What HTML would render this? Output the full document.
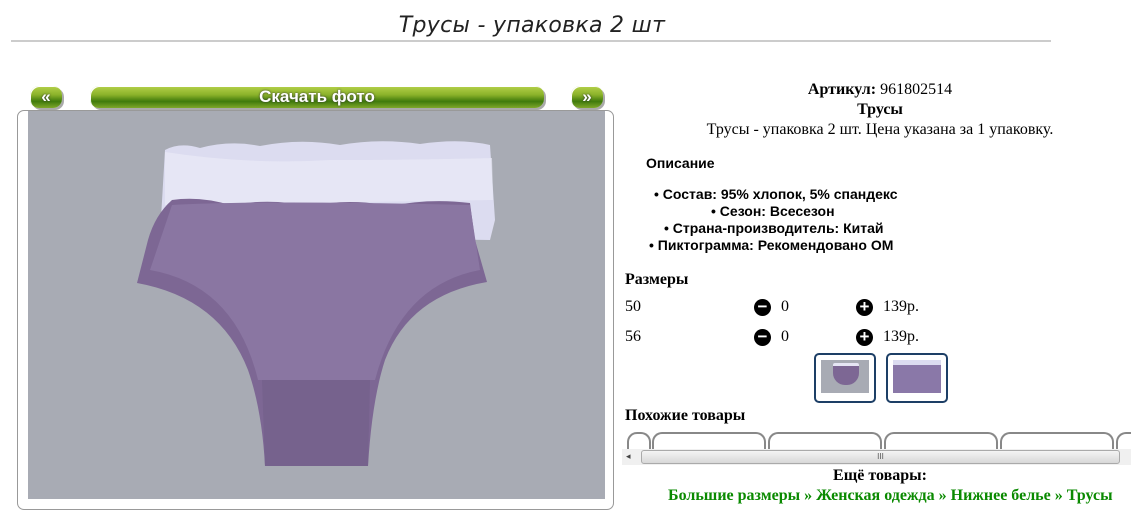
<!DOCTYPE html>
<html><head><meta charset="utf-8"><style>
*{margin:0;padding:0;box-sizing:border-box}
body{width:1131px;height:499px;overflow:hidden;background:#fff;position:relative;font-family:"Liberation Serif",serif;color:#000}
.a{position:absolute}
.t{font-family:"DejaVu Sans",sans-serif;font-style:italic;font-size:22px;color:#222;left:0;width:1064px;text-align:center;top:13px;letter-spacing:0.3px}
.hr{left:11px;width:1040px;top:40px;height:2px;background:#ccc}
.btn{background:linear-gradient(#b5d14a 0%,#8bb22a 40%,#3f7a0c 70%,#7fa82a 100%);border-radius:9px;box-shadow:2px 2px 0 #aaa, 1px 1px 0 #fff inset;color:#fff;font:bold 17px "Liberation Sans",sans-serif;text-align:center;line-height:22px;text-shadow:0 0 2px #333}
.frame{left:17px;top:110px;width:597px;height:400px;border:1px solid #999;border-radius:7px}
.s{font-family:"Liberation Sans",sans-serif;font-weight:bold;font-size:14px}
.ic{width:17px;height:17px;border-radius:50%;background:#000;color:#fff;font:bold 17px/16px "Liberation Sans",sans-serif;text-align:center}
.tab{top:432px;height:20px;border:2px solid #888;border-bottom:none;border-radius:10px 10px 0 0}
.th{top:353px;width:62px;height:50px;border:2px solid #1d3f66;border-radius:5px}
.f{font-size:16px}
</style></head><body>
<div class="a t">Трусы - упаковка 2 шт</div>
<div class="a hr"></div>
<div class="a btn" style="left:30px;top:86px;width:32px;height:22px">«</div>
<div class="a btn" style="left:90px;top:86px;width:454px;height:22px">Скачать фото</div>
<div class="a btn" style="left:571px;top:86px;width:32px;height:22px">»</div>
<div class="a frame"></div>
<svg class="a" style="left:28px;top:111px" width="577" height="388" viewBox="28 111 577 388">
<rect x="28" y="111" width="577" height="388" fill="#a8abb4"/>
<path d="M165 150 Q180 142 200 148 Q230 140 260 146 Q300 138 340 145 Q380 138 420 144 Q460 138 490 145 L495 220 L490 240 L160 235 Z" fill="#dcdcf0"/>
<path d="M165 152 Q250 165 330 160 Q420 160 492 158 L493 200 L165 205 Z" fill="#e9e9f7" opacity=".7"/>
<path d="M172 200 Q200 196 230 205 Q270 198 310 206 Q350 198 390 206 Q430 198 470 203 L475 240 L487 282 Q410 295 385 360 Q372 400 368 466 L265 466 Q262 410 248 370 Q220 298 137 283 L148 240 Q155 215 172 200 Z" fill="#7d6794"/>
<path d="M172 205 Q260 200 470 205 L480 270 Q400 285 375 380 L258 380 Q235 285 150 270 Z" fill="#8a76a2"/>
<path d="M262 380 L370 380 L368 466 L265 466 Z" fill="#76628d"/>
</svg>
<div class="a f" style="left:610px;top:81px;width:540px;text-align:center"><b>Артикул:</b> 961802514</div>
<div class="a f" style="left:610px;top:101px;width:540px;text-align:center"><b>Трусы</b></div>
<div class="a f" style="left:610px;top:121px;width:540px;text-align:center">Трусы - упаковка 2 шт. Цена указана за 1 упаковку.</div>
<div class="a s" style="left:646px;top:155px">Описание</div>
<div class="a s" style="left:654px;top:186px">• Состав: 95% хлопок, 5% спандекс</div>
<div class="a s" style="left:711px;top:203px">• Сезон: Всесезон</div>
<div class="a s" style="left:664px;top:220px">• Страна-производитель: Китай</div>
<div class="a s" style="left:649px;top:237px">• Пиктограмма: Рекомендовано ОМ</div>
<div class="a f" style="left:625px;top:271px;font-weight:bold">Размеры</div>
<div class="a f" style="left:625px;top:298px">50</div>
<div class="a ic" style="left:754px;top:299px">−</div>
<div class="a f" style="left:781px;top:298px">0</div>
<div class="a ic" style="left:856px;top:299px">+</div>
<div class="a f" style="left:883px;top:298px">139р.</div>
<div class="a f" style="left:625px;top:328px">56</div>
<div class="a ic" style="left:754px;top:329px">−</div>
<div class="a f" style="left:781px;top:328px">0</div>
<div class="a ic" style="left:856px;top:329px">+</div>
<div class="a f" style="left:883px;top:328px">139р.</div>
<div class="a th" style="left:814px"><div style="margin:5px;height:33px;background:#a8abb4;position:relative"><div style="position:absolute;left:12px;top:3px;width:26px;height:22px;background:#7d6794;border-radius:2px 2px 12px 12px;border-top:3px solid #e6e6f4"></div></div></div>
<div class="a th" style="left:886px"><div style="margin:5px;height:33px;background:#8a78a8;border-top:5px solid #dcdcf0"></div></div>
<div class="a f" style="left:625px;top:407px;font-weight:bold">Похожие товары</div>
<div class="a tab" style="left:627px;width:24px"></div>
<div class="a tab" style="left:652px;width:114px"></div>
<div class="a tab" style="left:768px;width:114px"></div>
<div class="a tab" style="left:884px;width:114px"></div>
<div class="a tab" style="left:1000px;width:114px"></div>
<div class="a tab" style="left:1116px;width:30px"></div>
<div class="a" style="left:622px;top:449px;width:509px;height:16px;background:#f0f0f0"></div>
<div class="a" style="left:626px;top:451px;font-size:9px;color:#444">◂</div>
<div class="a" style="left:641px;top:450px;width:479px;height:14px;border:1px solid #aaa;border-radius:3px;background:linear-gradient(#f4f4f4,#d8d8d8);text-align:center;font:8px/12px sans-serif;color:#555">III</div>
<div class="a f" style="left:610px;top:467px;width:540px;text-align:center;font-weight:bold">Ещё товары:</div>
<div class="a f" style="left:668px;top:487px;font-weight:bold;color:#0a8a00;white-space:nowrap">Большие размеры » Женская одежда » Нижнее белье » Трусы</div>
</body></html>
